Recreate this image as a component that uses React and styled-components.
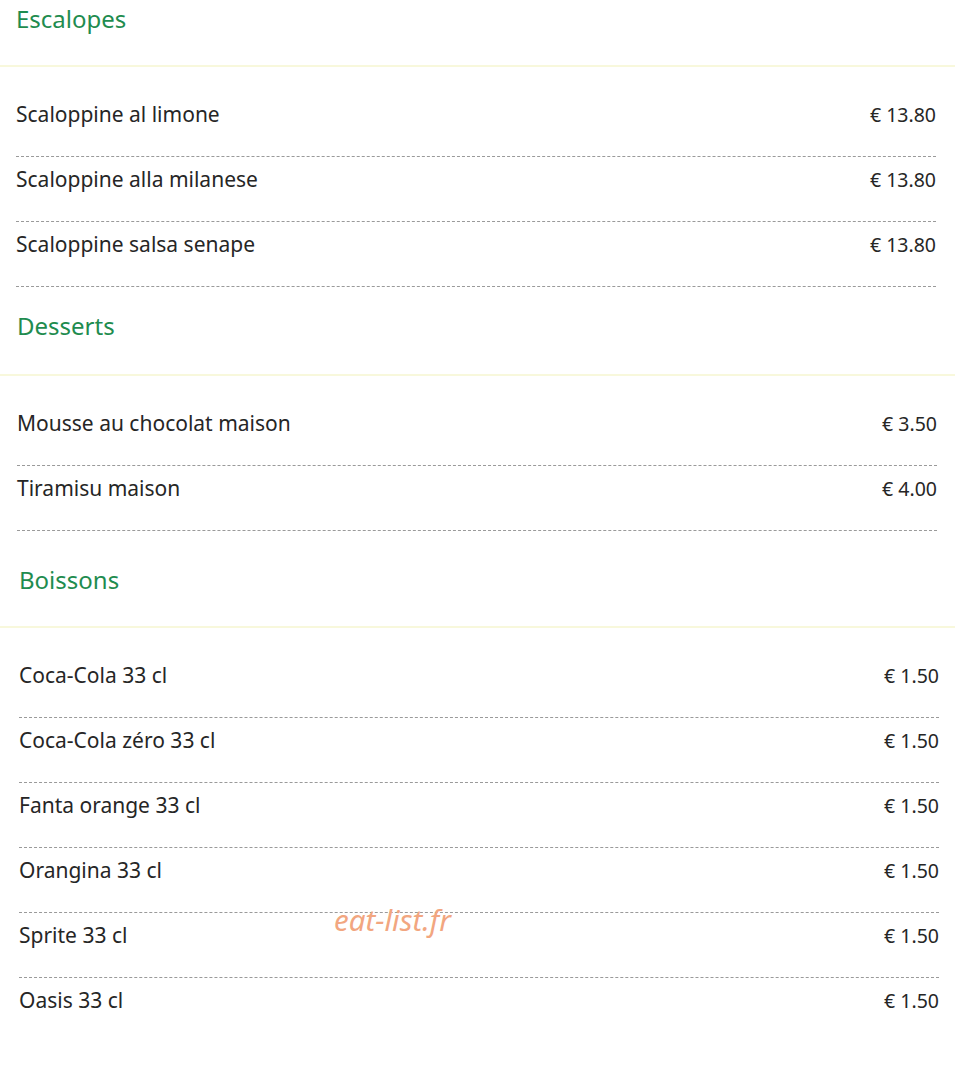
import React from "react";
import styled, { createGlobalStyle } from "styled-components";

const Global = createGlobalStyle`
  html, body { margin: 0; padding: 0; background: #fff; }
  body { font-family: "Noto Sans", "Open Sans", sans-serif; color: #262626; }
`;

const Page = styled.div`
  position: relative;
  width: 955px;
  min-height: 1066px;
  overflow: hidden;
`;

const Section = styled.section``;

const Heading = styled.h2`
  margin: 0;
  padding: ${(p) => p.$top}px 0 ${(p) => p.$bottom}px ${(p) => p.$inset}px;
  font-size: 24px;
  font-weight: 400;
  line-height: 30px;
  color: #1f8c4f;
  border-bottom: 2px solid #f8f8dc;
`;

const List = styled.ul`
  list-style: none;
  margin: 0 0 0 ${(p) => p.$inset}px;
  padding: 25px 0 0;
  width: 920px;
`;

const Row = styled.li`
  box-sizing: border-box;
  height: 65px;
  display: flex;
  justify-content: space-between;
  align-items: baseline;
  padding-top: 7px;
  line-height: 30px;
  border-bottom: ${(p) => (p.$last ? "none" : "1px dashed #9a9a9a")};
`;

const Name = styled.span`
  font-size: 21px;
`;

const Price = styled.span`
  font-size: 19.5px;
`;

const Watermark = styled.div`
  position: absolute;
  left: 334px;
  top: 902px;
  font-size: 29.5px;
  font-style: italic;
  color: #f2a680;
  line-height: 36px;
`;

const sections = [
  {
    title: "Escalopes",
    inset: 16,
    top: 4,
    bottom: 31,
    items: [
      ["Scaloppine al limone", "€ 13.80"],
      ["Scaloppine alla milanese", "€ 13.80"],
      ["Scaloppine salsa senape", "€ 13.80"],
    ],
  },
  {
    title: "Desserts",
    inset: 17,
    top: 24,
    bottom: 33,
    items: [
      ["Mousse au chocolat maison", "€ 3.50"],
      ["Tiramisu maison", "€ 4.00"],
    ],
  },
  {
    title: "Boissons",
    inset: 19,
    top: 34,
    bottom: 31,
    last: true,
    items: [
      ["Coca-Cola 33 cl", "€ 1.50"],
      ["Coca-Cola zéro 33 cl", "€ 1.50"],
      ["Fanta orange 33 cl", "€ 1.50"],
      ["Orangina 33 cl", "€ 1.50"],
      ["Sprite 33 cl", "€ 1.50"],
      ["Oasis 33 cl", "€ 1.50"],
    ],
  },
];

export default function App() {
  return (
    <Page>
      <Global />
      {sections.map((s) => (
        <Section key={s.title}>
          <Heading $inset={s.inset} $top={s.top} $bottom={s.bottom}>
            {s.title}
          </Heading>
          <List $inset={s.inset}>
            {s.items.map(([n, p], i) => (
              <Row key={n} $last={s.last && i === s.items.length - 1}>
                <Name>{n}</Name>
                <Price>{p}</Price>
              </Row>
            ))}
          </List>
        </Section>
      ))}
      <Watermark>eat-list.fr</Watermark>
    </Page>
  );
}
